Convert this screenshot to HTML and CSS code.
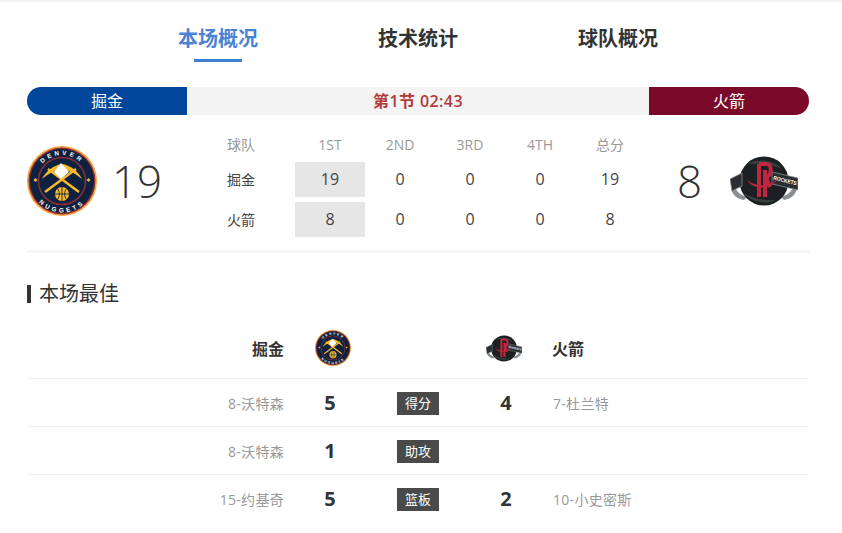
FILE: index.html
```html
<!DOCTYPE html>
<html lang="en">
<head>
    <meta charset="UTF-8">
    <title>掘金 vs 火箭</title>
    <link rel="stylesheet" href="styles.css">
</head>
<body>
    <svg class="defs" width="0" height="0">
        <defs>
            <path id="arc-top" d="M9 35a26 26 0 0 1 52 0"/>
            <path id="arc-bottom" d="M3.500 35a31.500 31.500 0 0 0 63 0"/>
            <symbol id="logo-nuggets" viewBox="0 0 70 70">
                <circle cx="35" cy="35" r="35" fill="#f2a33a"/>
                <circle cx="35" cy="35" r="33.400" fill="#8e2c3a"/>
                <circle cx="35" cy="35" r="32" fill="#0e2240"/>
                <circle cx="35" cy="35" r="23.500" fill="none" stroke="#8e2c3a" stroke-width="1.500"/>
                <text class="logo-ring"><textPath href="#arc-top" startOffset="50%" text-anchor="middle">DENVER</textPath></text>
                <text class="logo-ring"><textPath href="#arc-bottom" startOffset="50%" text-anchor="middle">NUGGETS</textPath></text>
                <path d="M18 46 49 23M52 46 21 23" stroke="#fdb927" stroke-width="2.400" fill="none"/>
                <path d="M15 33C19 25 27 19 35 18 43 19 51 25 55 33 48 27 41 24 35 24 29 24 22 27 15 33z" fill="#fdb927"/>
                <path d="M34 17 42 26 34 33 27 26z" fill="#fff"/>
                <circle cx="35" cy="48" r="7" fill="#fdb927"/>
                <path d="M28 48h14M35 41v14M30.500 42.500c2.500 3.500 2.500 7.500 0 11M39.500 42.500c-2.500 3.500-2.500 7.500 0 11" stroke="#0e2240" stroke-width=".9" fill="none"/>
                <path d="M6.500 34l2-2 2 2-2 2zM59.500 34l2-2 2 2-2 2z" fill="#fdb927"/>
            </symbol>
            <symbol id="logo-rockets" viewBox="0 0 68 50">
                <path d="M1 33C3 40 8 43 14 44L17 41C11 39 8 37 6 33zM67 33C65 40 60 43 54 44L51 41C57 39 60 37 62 33z" fill="#8b8f92"/>
                <circle cx="34" cy="25" r="24.500" fill="#1c2023"/>
                <path d="M17 8C28 2 44 4 52 13 42 8 28 7 17 8zM12 36C20 46 36 49 46 44 36 45 22 43 12 36z" fill="#39403f"/>
                <path d="M0 23 12 17V30L2 35z" fill="#2b2e30" stroke="#8b8f92" stroke-width=".8"/>
                <path d="M42 16 68 22V34L42 28z" fill="#2b2e30" stroke="#8b8f92" stroke-width=".8"/>
                <text class="logo-ribbon" transform="translate(43 23.500) rotate(14)" textLength="24" lengthAdjust="spacingAndGlyphs">ROCKETS</text>
                <path d="M29 8H37C42 8 42 20 36 21L40 31M29 8V41M35 14V41" stroke="#c0263f" stroke-width="4" fill="none"/>
                <path d="M17 24C25 31 39 31 47 24 41 34 23 34 17 24z" fill="#c0263f"/>
            </symbol>
        </defs>
    </svg>

    <div class="topline"></div>
    <div class="page">
        <div class="tabs">
            <a class="tab active">本场概况</a>
            <a class="tab">技术统计</a>
            <a class="tab">球队概况</a>
        </div>

        <div class="status">
            <div class="status_team home">掘金</div>
            <div class="status_time">第1节 02:43</div>
            <div class="status_team away">火箭</div>
        </div>

        <div class="scoreboard">
            <div class="side">
                <svg class="logo_big"><use href="#logo-nuggets"/></svg>
                <div class="big_score">19</div>
            </div>
            <table class="quarters">
                <tr class="head">
                    <td class="name">球队</td><td>1ST</td><td>2ND</td><td>3RD</td><td>4TH</td><td>总分</td>
                </tr>
                <tr>
                    <td class="name">掘金</td><td class="current"><span>19</span></td><td>0</td><td>0</td><td>0</td><td>19</td>
                </tr>
                <tr>
                    <td class="name">火箭</td><td class="current"><span>8</span></td><td>0</td><td>0</td><td>0</td><td>8</td>
                </tr>
            </table>
            <div class="side side_away">
                <div class="big_score">8</div>
                <svg class="logo_rockets"><use href="#logo-rockets"/></svg>
            </div>
        </div>

        <h2 class="section_title">本场最佳</h2>

        <div class="best">
            <div class="best_row best_head">
                <div class="player team_name">掘金</div>
                <div class="num"><svg class="logo_small"><use href="#logo-nuggets"/></svg></div>
                <div class="tag_cell"></div>
                <div class="num"><svg class="logo_small_r"><use href="#logo-rockets"/></svg></div>
                <div class="player team_away team_name">火箭</div>
            </div>
            <div class="best_row">
                <div class="player">8-沃特森</div>
                <div class="num">5</div>
                <div class="tag_cell"><span class="tag">得分</span></div>
                <div class="num">4</div>
                <div class="player away_player">7-杜兰特</div>
            </div>
            <div class="best_row">
                <div class="player">8-沃特森</div>
                <div class="num">1</div>
                <div class="tag_cell"><span class="tag">助攻</span></div>
                <div class="num"></div>
                <div class="player away_player"></div>
            </div>
            <div class="best_row">
                <div class="player">15-约基奇</div>
                <div class="num">5</div>
                <div class="tag_cell"><span class="tag">篮板</span></div>
                <div class="num">2</div>
                <div class="player away_player">10-小史密斯</div>
            </div>
        </div>
    </div>
</body>
</html>
```

FILE: styles.css
```css
body {
    margin: 0;
    background-color: #fff;
    color: #333;
    font-family: "Open Sans", "Noto Sans CJK SC", sans-serif;
}

.defs {
    position: absolute;
}

.logo-ring {
    font-family: "Liberation Sans", sans-serif;
    font-size: 6.200px;
    font-weight: bold;
    letter-spacing: 3px;
    fill: #fff;
}

.logo-ribbon {
    font-family: "Liberation Sans", sans-serif;
    font-size: 5.500px;
    font-weight: bold;
    fill: #fff;
}

.topline {
    height: 2px;
    background-color: #f4f4f4;
}

.page {
    width: 782px;
    margin-left: 27px;
}

/* tabs */
.tabs {
    display: flex;
    justify-content: center;
    height: 60px;
    padding-top: 19px;
}

.tab {
    position: relative;
    width: 200px;
    height: 41px;
    text-align: center;
    font-size: 20px;
    line-height: 35px;
    font-weight: bold;
    color: #333;
}

.tab.active {
    color: #4a82d4;
}

.tab.active::after {
    content: "";
    position: absolute;
    left: 76px;
    bottom: 0;
    width: 48px;
    height: 3px;
    background-color: #3f7fcf;
}

/* status bar */
.status {
    display: flex;
    height: 28px;
    margin-top: 6px;
    line-height: 28px;
    font-size: 16px;
    text-align: center;
}

.status_team {
    width: 160px;
    color: #fff;
}

.home {
    background-color: #00479b;
    border-radius: 14px 0 0 14px;
}

.away {
    background-color: #7a0a28;
    border-radius: 0 14px 14px 0;
}

.status_time {
    flex: 1;
    background-color: #f4f4f4;
    color: #b3393a;
    font-weight: 600;
    letter-spacing: 0.4px;
}

/* score table */
.scoreboard {
    display: flex;
    justify-content: space-between;
    height: 135px;
    border-bottom: 3px solid #f5f5f5;
}

.side {
    display: flex;
    align-items: center;
    width: 200px;
    height: 132px;
}

.side_away {
    justify-content: flex-end;
    width: 160px;
}

.logo_big {
    width: 70px;
    height: 70px;
    margin-right: 15px;
}

.logo_rockets {
    width: 68px;
    height: 50px;
    margin-left: 28px;
    margin-right: 11px;
}

.big_score {
    font-family: "Open Sans", sans-serif;
    font-size: 44px;
    font-weight: 300;
    color: #333;
}

.quarters {
    margin-top: 12px;
    margin-right: auto;
    border-collapse: collapse;
    height: 112px;
    font-size: 16px;
}

.quarters td {
    width: 70px;
    height: 40px;
    padding: 0;
    text-align: center;
    color: #444;
}

.quarters .head td {
    height: 30px;
    padding-top: 2px;
    font-size: 14px;
    color: #999;
}

.quarters td.name {
    width: 68px;
    text-align: left;
    font-size: 14px;
}

.quarters .head td.name {
    color: #999;
}

.quarters td.current span {
    display: block;
    height: 35px;
    line-height: 35px;
    background-color: #e6e6e6;
}

/* best players */
.section_title {
    height: 18px;
    margin: 32px 0 0;
    padding-left: 8px;
    border-left: 4px solid #333;
    font-size: 20px;
    font-weight: normal;
    line-height: 18px;
    color: #333;
}

.best {
    margin-top: 15px;
}

.best_row {
    display: grid;
    grid-template-columns: 257px 92px 84px 92px 1fr;
    align-items: center;
    height: 47px;
    border-top: 1px solid #eee;
}

.best_head {
    height: 60px;
    border-top: none;
}

.player {
    text-align: right;
    font-size: 14px;
    letter-spacing: 0.3px;
    color: #999;
}

.away_player {
    padding-left: 1px;
    text-align: left;
}

.team_name {
    font-size: 16px;
    letter-spacing: 0;
    font-weight: bold;
    color: #333;
}

.team_away {
    text-align: left;
}

.num {
    display: flex;
    justify-content: center;
    align-items: center;
    font-size: 20px;
    font-weight: bold;
    color: #333;
}

.tag_cell {
    text-align: center;
}

.tag {
    display: inline-block;
    width: 42px;
    height: 23px;
    line-height: 23px;
    background-color: #4a4a4a;
    color: #fff;
    font-size: 13px;
    vertical-align: middle;
}

.logo_small {
    width: 36px;
    height: 36px;
    margin-left: 5px;
}

.logo_small_r {
    width: 36px;
    height: 27px;
    margin-right: 4px;
}
```
